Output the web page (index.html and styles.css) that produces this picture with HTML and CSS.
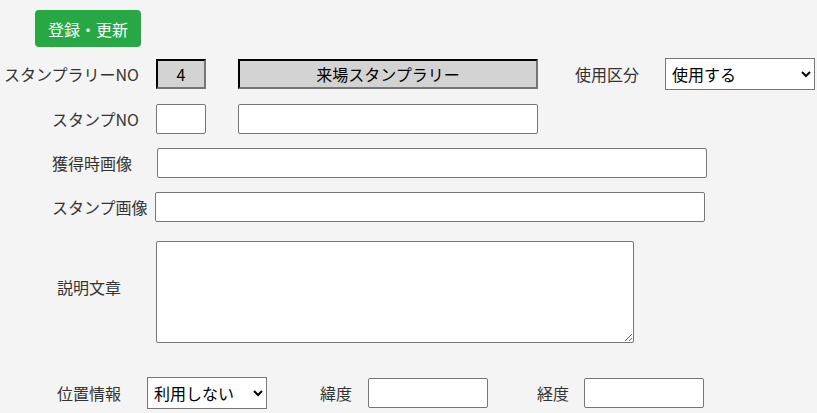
FILE: index.html
```html
<!DOCTYPE html>
<html lang="ja">
<head>
    <meta charset="UTF-8">
    <meta name="viewport" content="width=device-width, initial-scale=1.0">
    <title>スタンプ登録</title>
    <link rel="stylesheet" href="styles.css">
</head>
<body>
    <button class="btn-save">登録・更新</button>

    <div class="row row-rally">
        <label class="lbl lbl-right">スタンプラリーNO</label>
        <input type="text" class="txt-no readonly" value="4" readonly>
        <input type="text" class="txt-name readonly" value="来場スタンプラリー" readonly>
        <label class="lbl lbl-use">使用区分</label>
        <select class="sel-use">
            <option>使用する</option>
            <option>使用しない</option>
        </select>
    </div>

    <div class="row row-stamp">
        <label class="lbl lbl-right">スタンプNO</label>
        <input type="text" class="txt-no">
        <input type="text" class="txt-name">
    </div>

    <div class="row row-img1">
        <label class="lbl lbl-img1">獲得時画像</label>
        <input type="text" class="txt-long">
    </div>

    <div class="row row-img2">
        <label class="lbl lbl-img2">スタンプ画像</label>
        <input type="text" class="txt-long">
    </div>

    <div class="row row-memo">
        <label class="lbl lbl-memo">説明文章</label>
        <textarea class="txt-memo"></textarea>
    </div>

    <div class="row row-pos">
        <label class="lbl lbl-pos">位置情報</label>
        <select class="sel-pos">
            <option>利用しない</option>
            <option>利用する</option>
        </select>
        <label class="lbl lbl-lat">緯度</label>
        <input type="text" class="txt-geo">
        <label class="lbl lbl-lng">経度</label>
        <input type="text" class="txt-geo">
    </div>
</body>
</html>
```

FILE: styles.css
```css
* {
    margin: 0;
    padding: 0;
    box-sizing: border-box;
    font-family: "Noto Sans CJK JP", "Noto Sans", sans-serif;
}
body {
    background-color: #f4f4f4;
    color: #333;
    font-size: 16px;
}
.btn-save {
    display: block;
    margin: 10px 0 0 35px;
    width: 106px;
    height: 37px;
    border: none;
    border-radius: 4px;
    background-color: #28a745;
    color: #fff;
    font-size: 16px;
}
.row {
    display: flex;
    align-items: center;
}
.lbl {
    flex: none;
    white-space: nowrap;
    font-size: 16px;
}
input, select, textarea {
    flex: none;
    background: #fff;
    border: 1px solid #767676;
    border-radius: 2px;
    color: #000;
    font-size: 16px;
}
input {
    height: 30px;
    padding: 0 4px;
}
select {
    height: 32px;
    padding: 0 2px;
    border-radius: 0;
}

/* 1行目 */
.row-rally {
    margin-top: 11px;
    height: 32px;
}
.lbl-right {
    width: 139px;
    margin-right: 17px;
    text-align: right;
}
.txt-no {
    width: 50px;
}
.txt-name {
    width: 300px;
    margin-left: 32px;
}
.readonly {
    background-color: #d3d3d3;
    border: 2px inset #767676;
    border-top-color: #222;
    border-left-color: #222;
    border-radius: 0;
    text-align: center;
}
.lbl-use {
    width: 127px;
    padding-left: 37px;
}
.sel-use {
    width: 150px;
}

/* 2行目 */
.row-stamp {
    margin-top: 14px;
    height: 30px;
}

/* 画像 */
.row-img1 {
    margin-top: 14px;
    height: 30px;
}
.lbl-img1 {
    margin-left: 52px;
    width: 105px;
}
.row-img2 {
    margin-top: 14px;
    height: 30px;
}
.lbl-img2 {
    margin-left: 52px;
    width: 103px;
}
.txt-long {
    width: 550px;
}

/* 説明 */
.row-memo {
    margin-top: 19px;
}
.lbl-memo {
    margin-left: 57px;
    margin-bottom: 10px;
    width: 99px;
}
.txt-memo {
    width: 478px;
    height: 102px;
    padding: 2px;
}

/* 位置情報 */
.row-pos {
    margin-top: 34px;
    height: 32px;
}
.lbl-pos {
    margin-left: 57px;
    width: 90px;
}
.sel-pos {
    width: 120px;
}
.lbl-lat {
    margin-left: 53px;
    width: 48px;
}
.lbl-lng {
    margin-left: 49px;
    width: 47px;
}
.txt-geo {
    width: 120px;
}
```
